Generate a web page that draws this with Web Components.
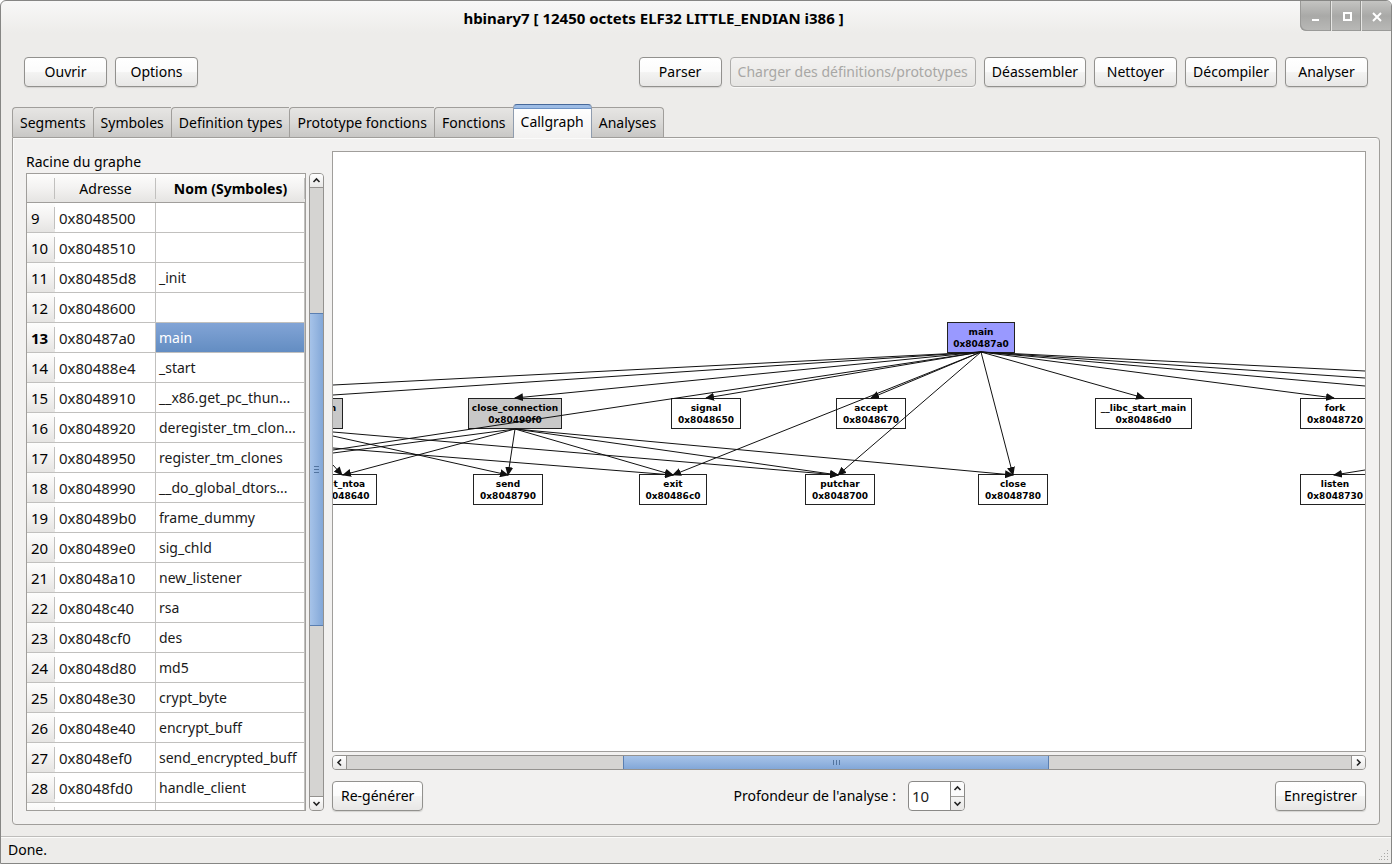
<!DOCTYPE html>
<html lang="fr">
<head>
<meta charset="utf-8">
<title>hbinary7</title>
<style>
  html, body { margin: 0; height: 100%; background: #fff; }
  body { font: 14px/20px "Noto Sans", "Open Sans", sans-serif; color: #000; }
</style>
</head>
<body>
<hb-window>
  <hb-titlebar slot="title">hbinary7 [ 12450 octets ELF32 LITTLE_ENDIAN i386 ]</hb-titlebar>
  <hb-toolbar slot="toolbar">
    <hb-button>Ouvrir</hb-button>
    <hb-button>Options</hb-button>
    <hb-button slot="end">Parser</hb-button>
    <hb-button slot="end" disabled>Charger des définitions/prototypes</hb-button>
    <hb-button slot="end">Déassembler</hb-button>
    <hb-button slot="end">Nettoyer</hb-button>
    <hb-button slot="end">Décompiler</hb-button>
    <hb-button slot="end">Analyser</hb-button>
  </hb-toolbar>
  <hb-tabs>
    <hb-tab slot="tab">Segments</hb-tab>
    <hb-tab slot="tab">Symboles</hb-tab>
    <hb-tab slot="tab">Definition types</hb-tab>
    <hb-tab slot="tab">Prototype fonctions</hb-tab>
    <hb-tab slot="tab">Fonctions</hb-tab>
    <hb-tab slot="tab" active>Callgraph</hb-tab>
    <hb-tab slot="tab">Analyses</hb-tab>
    <hb-symbols></hb-symbols>
    <hb-callgraph></hb-callgraph>
  </hb-tabs>
  <hb-statusbar slot="status">Done.</hb-statusbar>
</hb-window>

<script>
function define(name, html, setup) {
  const template = document.createElement('template');
  template.innerHTML = html;
  customElements.define(name, class extends HTMLElement {
    constructor() {
      super();
      this.attachShadow({ mode: 'open' }).append(template.content.cloneNode(true));
    }
    connectedCallback() {
      if (setup && !this.ready) { this.ready = true; setup(this, this.shadowRoot); }
    }
  });
}

define('hb-window', `
  <style>
    :host { display: flex; flex-direction: column; box-sizing: border-box; height: 100vh; min-height: 480px;
      border: 1px solid #868684; border-radius: 6px 6px 0 0; overflow: hidden;
      background: linear-gradient(#f8f8f7, #edecea 32px); }
    main { flex: 1; min-height: 0; display: flex; padding: 0 11px 11px; }
    ::slotted(hb-tabs) { flex: 1; min-width: 0; }
  </style>
  <slot name="title"></slot><slot name="toolbar"></slot><main><slot></slot></main><slot name="status"></slot>`);

define('hb-titlebar', `
  <style>
    :host { display: flex; height: 30px; align-items: stretch; }
    h1 { flex: 1; margin: 0; padding: 7px 0 0 6px; box-sizing: border-box; text-align: center; font: inherit; font-size: 15px; font-weight: bold; line-height: 20px; }
    div { display: flex; border-bottom-left-radius: 6px; overflow: hidden; background: linear-gradient(#c4c4c2, #a9a9a7 50%, #b9b9b7);
      box-shadow: inset 1px -1px #9a9a98; padding-left: 1px; }
    button { width: 30px; padding: 0; border: 0; background: none; display: grid; place-items: center; }
    button + button { border-left: 1px solid #e6e6e4; box-shadow: -1px 0 #92928f; }
    svg { display: block; }
  </style>
  <h1><slot></slot></h1>
  <div>
    <button aria-label="Réduire"><svg width="12" height="12"><path d="M2 10h7" stroke="#fff" stroke-width="2"/></svg></button>
    <button aria-label="Agrandir"><svg width="12" height="12"><path d="M3 3h7v7H3z" fill="none" stroke="#fff" stroke-width="2"/></svg></button>
    <button aria-label="Fermer"><svg width="12" height="12"><path d="M2 3l8 8M10 3l-8 8" stroke="#fff" stroke-width="2"/></svg></button>
  </div>`);

define('hb-toolbar', `
  <style>
    :host { display: flex; justify-content: space-between; padding: 26px 23px 17px; --button-padding: 7px; }
    div { display: flex; gap: 8px; }
  </style>
  <div><slot></slot></div><div><slot name="end"></slot></div>`);

define('hb-button', `
  <style>
    :host { display: block; }
    button { box-sizing: border-box; height: 30px; min-width: 83px; padding: 0 var(--button-padding, 8px); font: inherit; color: #000; white-space: nowrap;
      border: 1px solid #92918e; border-radius: 4px; background: linear-gradient(#fff, #fbfbfb 50%, #f3f3f2 52%, #e8e7e6);
      box-shadow: 0 1px 1px #d4d3d1; }
    button:disabled { color: #a8a7a5; border-color: #aeadab; background: linear-gradient(#f3f2f1, #e6e5e3); box-shadow: 0 1px #f8f8f7; }
  </style>
  <button type="button"><slot></slot></button>`,
  (host, root) => { root.querySelector('button').disabled = host.hasAttribute('disabled'); });

define('hb-tabs', `
  <style>
    :host { display: flex; flex-direction: column; }
    nav { display: flex; align-items: flex-end; height: 33px; }
    section { flex: 1; min-height: 0; display: grid; grid-template-columns: 298px minmax(0, 1fr); grid-template-rows: minmax(0, 1fr); gap: 8px;
      padding: 13px; border: 1px solid #a09e9b; border-radius: 0 4px 4px 4px; background: #f2f1f0; box-shadow: inset 1px 1px #fbfbfa; }
  </style>
  <nav role="tablist"><slot name="tab"></slot></nav>
  <section role="tabpanel"><slot></slot></section>`);

define('hb-tab', `
  <style>
    :host { display: block; }
    button { display: block; box-sizing: border-box; height: 30px; padding: 0 7px; font: inherit; color: #000; white-space: nowrap;
      border: 1px solid #a09e9b; border-width: 1px 0 0 1px; border-radius: 4px 0 0 0; background: linear-gradient(#e6e5e3, #dad9d7 50%, #c8c7c5); }
    :host(:last-of-type) button { border-right-width: 1px; border-radius: 0 4px 0 0; border-left: 0; }
    :host([active]) { position: relative; margin-bottom: -1px; }
    :host([active]) button { height: 34px; border: 1px solid #8f9cae; border-top: 1px solid #47699a; border-bottom: 0; border-radius: 4px 4px 0 0;
      background: linear-gradient(#9dbce5 3px, #6d92c4 3px, #6d92c4 4px, #fff 4px, #f2f1f0); }
  </style>
  <button type="button" role="tab"><slot></slot></button>`,
  (host, root) => root.querySelector('button').setAttribute('aria-selected', host.hasAttribute('active')));

define('hb-scrollbar', `
  <style>
    :host { display: flex; flex: none; box-sizing: border-box; border: 1px solid #94928f; border-radius: 4px; overflow: hidden; background: #d5d4d2; }
    :host([vertical]) { flex-direction: column; width: 15px; }
    :host(:not([vertical])) { height: 15px; }
    button { flex: none; box-sizing: content-box; width: 13px; height: 13px; padding: 0; border: 0; display: grid; place-items: center; background: linear-gradient(#fff, #e8e7e6); }
    :host([vertical]) .less { border-bottom: 1px solid #94928f; }
    :host([vertical]) .more { border-top: 1px solid #94928f; }
    :host(:not([vertical])) .less { border-right: 1px solid #94928f; }
    :host(:not([vertical])) .more { border-left: 1px solid #94928f; }
    svg { display: block; fill: none; stroke: #222; stroke-width: 1.6; }
    :host(:not([vertical])) svg { transform: rotate(-90deg); }
    .before { flex: var(--before) 1 0; }
    .after { flex: var(--after) 1 0; }
    .thumb { flex: var(--size) 1 0; box-sizing: border-box; display: grid; place-items: center; border: solid #5a7fb2; border-width: 1px 0;
      background: linear-gradient(#a6c3e9, #97b7e1 45%, #82a7d8); }
    :host([vertical]) .thumb { background: linear-gradient(90deg, #a6c3e9, #97b7e1 45%, #82a7d8); }
    :host(:not([vertical])) .thumb { border-width: 0 1px; }
    .thumb i { width: 7px; height: 5px; background: repeating-linear-gradient(90deg, #52749f 0 1px, transparent 1px 3px); }
    :host([vertical]) .thumb i { width: 5px; height: 7px; background: repeating-linear-gradient(#52749f 0 1px, transparent 1px 3px); }
  </style>
  <button class="less" type="button" aria-label="Reculer"><svg width="9" height="9"><path d="M1.500 6l3-3 3 3"/></svg></button>
  <div class="before"></div><div class="thumb"><i></i></div><div class="after"></div>
  <button class="more" type="button" aria-label="Avancer"><svg width="9" height="9"><path d="M1.500 3l3 3 3-3"/></svg></button>`,
  (host) => {
    const [before, size, after] = host.getAttribute('parts').split(' ');
    host.style.setProperty('--before', before);
    host.style.setProperty('--size', size);
    host.style.setProperty('--after', after);
  });

const symbols = [
  [9, '0x8048500', ''], [10, '0x8048510', ''], [11, '0x80485d8', '_init'], [12, '0x8048600', ''],
  [13, '0x80487a0', 'main'], [14, '0x80488e4', '_start'], [15, '0x8048910', '__x86.get_pc_thun...'],
  [16, '0x8048920', 'deregister_tm_clon...'], [17, '0x8048950', 'register_tm_clones'],
  [18, '0x8048990', '__do_global_dtors...'], [19, '0x80489b0', 'frame_dummy'], [20, '0x80489e0', 'sig_chld'],
  [21, '0x8048a10', 'new_listener'], [22, '0x8048c40', 'rsa'], [23, '0x8048cf0', 'des'], [24, '0x8048d80', 'md5'],
  [25, '0x8048e30', 'crypt_byte'], [26, '0x8048e40', 'encrypt_buff'], [27, '0x8048ef0', 'send_encrypted_buff'],
  [28, '0x8048fd0', 'handle_client'], ['', '', ''],
];

define('hb-symbols', `
  <style>
    :host { display: flex; flex-direction: column; min-height: 0; }
    h2 { margin: 0; font: inherit; line-height: 22px; }
    .row { flex: 1; min-height: 0; display: flex; gap: 3px; }
    .view { flex: 1; min-width: 0; overflow: hidden; border: 1px solid #a09e9b; background: #fff; }
    table { width: 100%; table-layout: fixed; border-collapse: separate; border-spacing: 0; }
    th, td { box-sizing: border-box; height: 30px; padding: 0 3px; text-align: left; font-weight: normal; white-space: nowrap; overflow: hidden; border-bottom: 1px solid #c1c0be; }
    thead th { height: 29px; padding-top: 2px; text-align: center; border-color: #a09e9b; }
    th { background: linear-gradient(#c1c0be, #c1c0be) right 4px / 1px calc(100% - 4px) no-repeat, linear-gradient(#fdfdfc, #f3f2f1 50%, #e5e4e2); }
    thead th { background: linear-gradient(#c1c0be, #c1c0be) right 4px / 1px 21px no-repeat, linear-gradient(#fdfdfc, #f3f2f1 50%, #e5e4e2); }
    tbody th { padding-left: 4px; background-size: 1px 22px, auto; font-size: 15px; }
    td { border-right: 1px solid #c1c0be; color: #1a1a1a; }
    td:nth-child(2) { padding-left: 4px; font-size: 15px; }
    thead th:last-child, .current th { font-weight: bold; }
    .current td:last-child { color: #fff; background: linear-gradient(#82a4d6, #638dc2); }
  </style>
  <h2>Racine du graphe</h2>
  <div class="row">
    <div class="view">
      <table>
        <colgroup><col style="width:28px"><col style="width:101px"><col></colgroup>
        <thead><tr><th></th><th scope="col">Adresse</th><th scope="col">Nom (Symboles)</th></tr></thead>
        <tbody></tbody>
      </table>
    </div>
    <hb-scrollbar vertical parts="125 312 171"></hb-scrollbar>
  </div>`,
  (host, root) => {
    const body = root.querySelector('tbody');
    for (const [index, address, name] of symbols) {
      const row = body.insertRow();
      const head = document.createElement('th');
      head.scope = 'row';
      head.textContent = index;
      row.append(head);
      row.insertCell().textContent = address;
      row.insertCell().textContent = name;
      if (name === 'main') row.className = 'current';
    }
  });

define('hb-node', `
  <style>
    :host { position: absolute; box-sizing: border-box; height: 31px; padding-top: 3px; border: 1px solid #222; background: #fff;
      font: bold 9px/12px "DejaVu Sans", sans-serif; text-align: center; white-space: nowrap; }
    :host([kind=root]) { background: #9999ff; }
    :host([kind=inner]) { background: #c8c8c8; }
    div { display: flex; justify-content: center; }
  </style>
  <div><slot></slot></div><div><slot name="address"></slot></div>`);

// name, address, x, y, width, kind
const nodes = [
  ['main', '0x80487a0', 614, 170, 68, 'root'],
  ['n', '', -10, 246, 20, 'inner'],
  ['close_connection', '0x80490f0', 135, 246, 94, 'inner'],
  ['signal', '0x8048650', 338, 246, 70],
  ['accept', '0x8048670', 503, 246, 70],
  ['__libc_start_main', '0x80486d0', 762, 246, 97],
  ['fork', '0x8048720', 967, 246, 70],
  ['inet_ntoa', '0x8048640', -27, 322, 71],
  ['send', '0x8048790', 140, 322, 70],
  ['exit', '0x80486c0', 306, 322, 68],
  ['putchar', '0x8048700', 472, 322, 70],
  ['close', '0x8048780', 645, 322, 70],
  ['listen', '0x8048730', 967, 322, 70],
];

// x1, y1, x2, y2, without arrow head when the target is out of view
const edges = [
  [648, 200, 0, 233, 1], [648, 200, 0, 243, 1], [648, 200, 182, 246], [648, 200, 373, 246], [648, 200, 0, 298, 1],
  [648, 200, 538, 246], [648, 200, 340, 323], [648, 200, 505, 323], [648, 200, 680, 323], [648, 200, 811, 246],
  [648, 200, 1001, 246], [648, 200, 1032, 219, 1], [648, 200, 1032, 226, 1], [648, 200, 1032, 234, 1],
  [1032, 318, 1001, 323],
  [182, 277, 0, 301, 1], [182, 277, 10, 323], [182, 277, 175, 323], [182, 277, 340, 323], [182, 277, 505, 323], [182, 277, 680, 323],
  [0, 280, 505, 323], [0, 284, 175, 323], [0, 296, 340, 323], [0, 313, 9, 323],
];

define('hb-canvas', `
  <style>
    :host { display: block; position: relative; overflow: hidden; border: 1px solid #a09e9b; background: #fff; }
    svg { position: absolute; left: 0; top: 0; width: 100%; height: 100%; }
  </style>
  <svg aria-hidden="true">
    <defs><marker id="head" markerUnits="userSpaceOnUse" markerWidth="9" markerHeight="8" refX="8" refY="4" orient="auto"><path d="M0 0l9 4-9 4z" fill="#111"/></marker></defs>
  </svg>`,
  (host, root) => {
    const svg = root.querySelector('svg');
    for (const [name, address, x, y, width, kind] of nodes) {
      const node = document.createElement('hb-node');
      const line = document.createElement('span');
      line.slot = 'address';
      line.textContent = address;
      node.append(name, line);
      node.style.cssText = `left:${x}px;top:${y}px;width:${width}px`;
      if (kind) node.setAttribute('kind', kind);
      svg.before(node);
    }
    for (const [x1, y1, x2, y2, open] of edges) {
      const path = document.createElementNS('http://www.w3.org/2000/svg', 'path');
      path.setAttribute('d', `M${x1} ${y1}L${x2} ${y2}`);
      path.setAttribute('stroke', '#111');
      if (!open) path.setAttribute('marker-end', 'url(#head)');
      svg.append(path);
    }
  });

define('hb-spinbox', `
  <style>
    :host { display: flex; align-items: center; gap: 12px; }
    div { display: flex; box-sizing: border-box; width: 57px; height: 30px; border: 1px solid #8a8987; border-radius: 4px; overflow: hidden; background: #fff; }
    input { flex: 1; min-width: 0; box-sizing: border-box; padding: 0 3px; border: 0; font: inherit; font-size: 15px; color: #222; background: none; }
    p { margin: 0; display: flex; flex-direction: column; width: 13px; border-left: 1px solid #8a8987; }
    button { flex: 1; padding: 0; border: 0; display: grid; place-items: center; background: #fbfbfb; }
    button + button { border-top: 1px solid #a09e9b; background: linear-gradient(#f4f4f3, #e8e7e6); }
    svg { display: block; fill: none; stroke: #222; stroke-width: 1.6; }
  </style>
  <label for="depth"><slot></slot></label>
  <div>
    <input id="depth" inputmode="numeric" value="10">
    <p>
      <button type="button" aria-label="Augmenter"><svg width="9" height="7"><path d="M1.500 5l3-3 3 3"/></svg></button>
      <button type="button" aria-label="Diminuer"><svg width="9" height="7"><path d="M1.500 2l3 3 3-3"/></svg></button>
    </p>
  </div>`);

define('hb-callgraph', `
  <style>
    :host { display: flex; flex-direction: column; min-width: 0; min-height: 0; }
    hb-canvas { flex: 1; min-height: 0; margin-bottom: 3px; }
    footer { display: flex; justify-content: space-between; margin-top: 11px; }
  </style>
  <hb-canvas></hb-canvas>
  <hb-scrollbar parts="277 424 303"></hb-scrollbar>
  <footer>
    <hb-button>Re-générer</hb-button>
    <hb-spinbox>Profondeur de l'analyse :</hb-spinbox>
    <hb-button>Enregistrer</hb-button>
  </footer>`);

define('hb-statusbar', `
  <style>
    :host { display: flex; align-items: center; justify-content: space-between; height: 26px; padding-left: 7px; border-top: 1px solid #bebdbb; box-shadow: inset 0 1px #fbfbfa; }
    svg { align-self: flex-end; fill: #a8a7a5; }
  </style>
  <span><slot></slot></span>
  <svg width="12" height="13" aria-hidden="true"><path d="M8 0h1v1h-1zM8 3h1v1h-1zM5 3h1v1h-1zM8 6h1v1h-1zM5 6h1v1h-1zM2 6h1v1h-1zM8 9h1v1h-1zM5 9h1v1h-1zM2 9h1v1h-1zM0 9h1v1h-1z"/></svg>`);
</script>
</body>
</html>
